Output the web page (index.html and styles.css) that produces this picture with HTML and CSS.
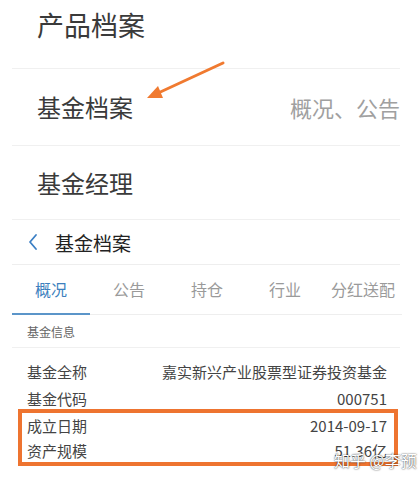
FILE: index.html
```html
<!DOCTYPE html>
<html lang="zh-CN">

<head>
    <meta charset="UTF-8">
    <meta name="viewport" content="width=device-width, initial-scale=1.0">
    <title>基金档案</title>
    <link rel="stylesheet" href="styles.css">
</head>

<body>

    <div class="page">
        <div class="menu">
            <div class="menu-item first">
                <span class="title big">产品档案</span>
            </div>
            <div class="menu-item second">
                <span class="title">基金档案</span>
                <span class="hint">概况、公告</span>
            </div>
            <div class="menu-item third">
                <span class="title">基金经理</span>
            </div>
        </div>

        <div class="header">
            <svg class="back" width="12" height="18" viewBox="0 0 12 18">
                <path d="M9 2 L3 9 L9 16" fill="none" stroke="#3b7fc4" stroke-width="1.8" stroke-linecap="round" stroke-linejoin="round" />
            </svg>
            <span class="header-title">基金档案</span>
        </div>

        <div class="tabs">
            <div class="tab active">概况</div>
            <div class="tab">公告</div>
            <div class="tab">持仓</div>
            <div class="tab">行业</div>
            <div class="tab">分红送配</div>
        </div>

        <div class="section-title">基金信息</div>

        <div class="info">
            <div class="row">
                <span>基金全称</span>
                <span>嘉实新兴产业股票型证券投资基金</span>
            </div>
            <div class="row">
                <span>基金代码</span>
                <span>000751</span>
            </div>
            <div class="highlight">
                <div class="row">
                    <span>成立日期</span>
                    <span>2014-09-17</span>
                </div>
                <div class="row last">
                    <span>资产规模</span>
                    <span>51.36亿</span>
                </div>
            </div>
        </div>

        <!-- annotation arrow -->
        <svg class="arrow" width="418" height="120" viewBox="0 0 418 120">
            <line x1="223" y1="63" x2="156" y2="94" stroke="#f07a30" stroke-width="3" stroke-linecap="round" />
            <path d="M147 98 L158 86 L163 98 Z" fill="#f07a30" />
        </svg>

        <div class="watermark">知乎 @李预</div>
    </div>

</body>

</html>
```

FILE: styles.css
```css
body {
    font-family: "Noto Sans CJK SC", "Noto Sans", sans-serif;
    margin: 0;
    padding: 0;
    background-color: #fff;
    color: #333;
}

.page {
    position: relative;
    width: 418px;
    height: 479px;
    overflow: hidden;
}

.menu {
    margin: 0 18px 0 12px;
}

.menu-item {
    display: flex;
    justify-content: space-between;
    align-items: center;
    padding-left: 25px;
    border-bottom: 1px solid #f0f0f0;
    box-sizing: border-box;
}

.menu-item.first {
    height: 69px;
    align-items: flex-start;
    padding-top: 11px;
}

.menu-item.second {
    height: 77px;
}

.menu-item.third {
    height: 74px;
}

.title {
    font-size: 24px;
    line-height: 1;
    color: #3a3a3a;
}

.title.big {
    font-size: 27px;
}

.hint {
    font-size: 22px;
    line-height: 1;
    color: #a0a0a0;
}

.header {
    display: flex;
    align-items: center;
    height: 45px;
    margin: 0 18px 0 12px;
    padding-left: 15px;
    border-bottom: 1px solid #eee;
    box-sizing: border-box;
}

.back {
    margin-right: 16px;
}

.header-title {
    font-size: 19px;
    color: #222;
}

.tabs {
    display: grid;
    grid-template-columns: repeat(5, 1fr);
    margin: 0 16px 0 12px;
    border-bottom: 1px solid #eee;
}

.tab {
    height: 50px;
    display: flex;
    align-items: center;
    justify-content: center;
    font-size: 16px;
    color: #9a9a9a;
    box-sizing: border-box;
    border-bottom: 2px solid transparent;
    margin-bottom: -1px;
}

.tab.active {
    color: #3d7fbe;
    border-bottom-color: #5b95c9;
}

.section-title {
    height: 32px;
    display: flex;
    align-items: center;
    margin: 0 18px 0 12px;
    padding-left: 15px;
    font-size: 12px;
    color: #666;
    border-bottom: 1px solid #f0f0f0;
}

.info {
    padding-top: 10px;
}

.row {
    display: flex;
    justify-content: space-between;
    align-items: center;
    height: 27px;
    padding: 0 31px 0 27px;
    font-size: 15px;
    color: #444;
}

.highlight {
    margin: -3px 20px 0 18px;
    border: 4px solid #ee7430;
}

.highlight .row {
    height: 25px;
    padding: 0 7px 0 5px;
}

.highlight .row.last {
    height: 24px;
}

.arrow {
    position: absolute;
    left: 0;
    top: 0;
}

.watermark {
    position: absolute;
    left: 334px;
    top: 448px;
    font-size: 16px;
    color: #fff;
    text-shadow: 0 0 2px rgba(0, 0, 0, 0.6), 0 0 1px rgba(0, 0, 0, 0.5);
}
```
